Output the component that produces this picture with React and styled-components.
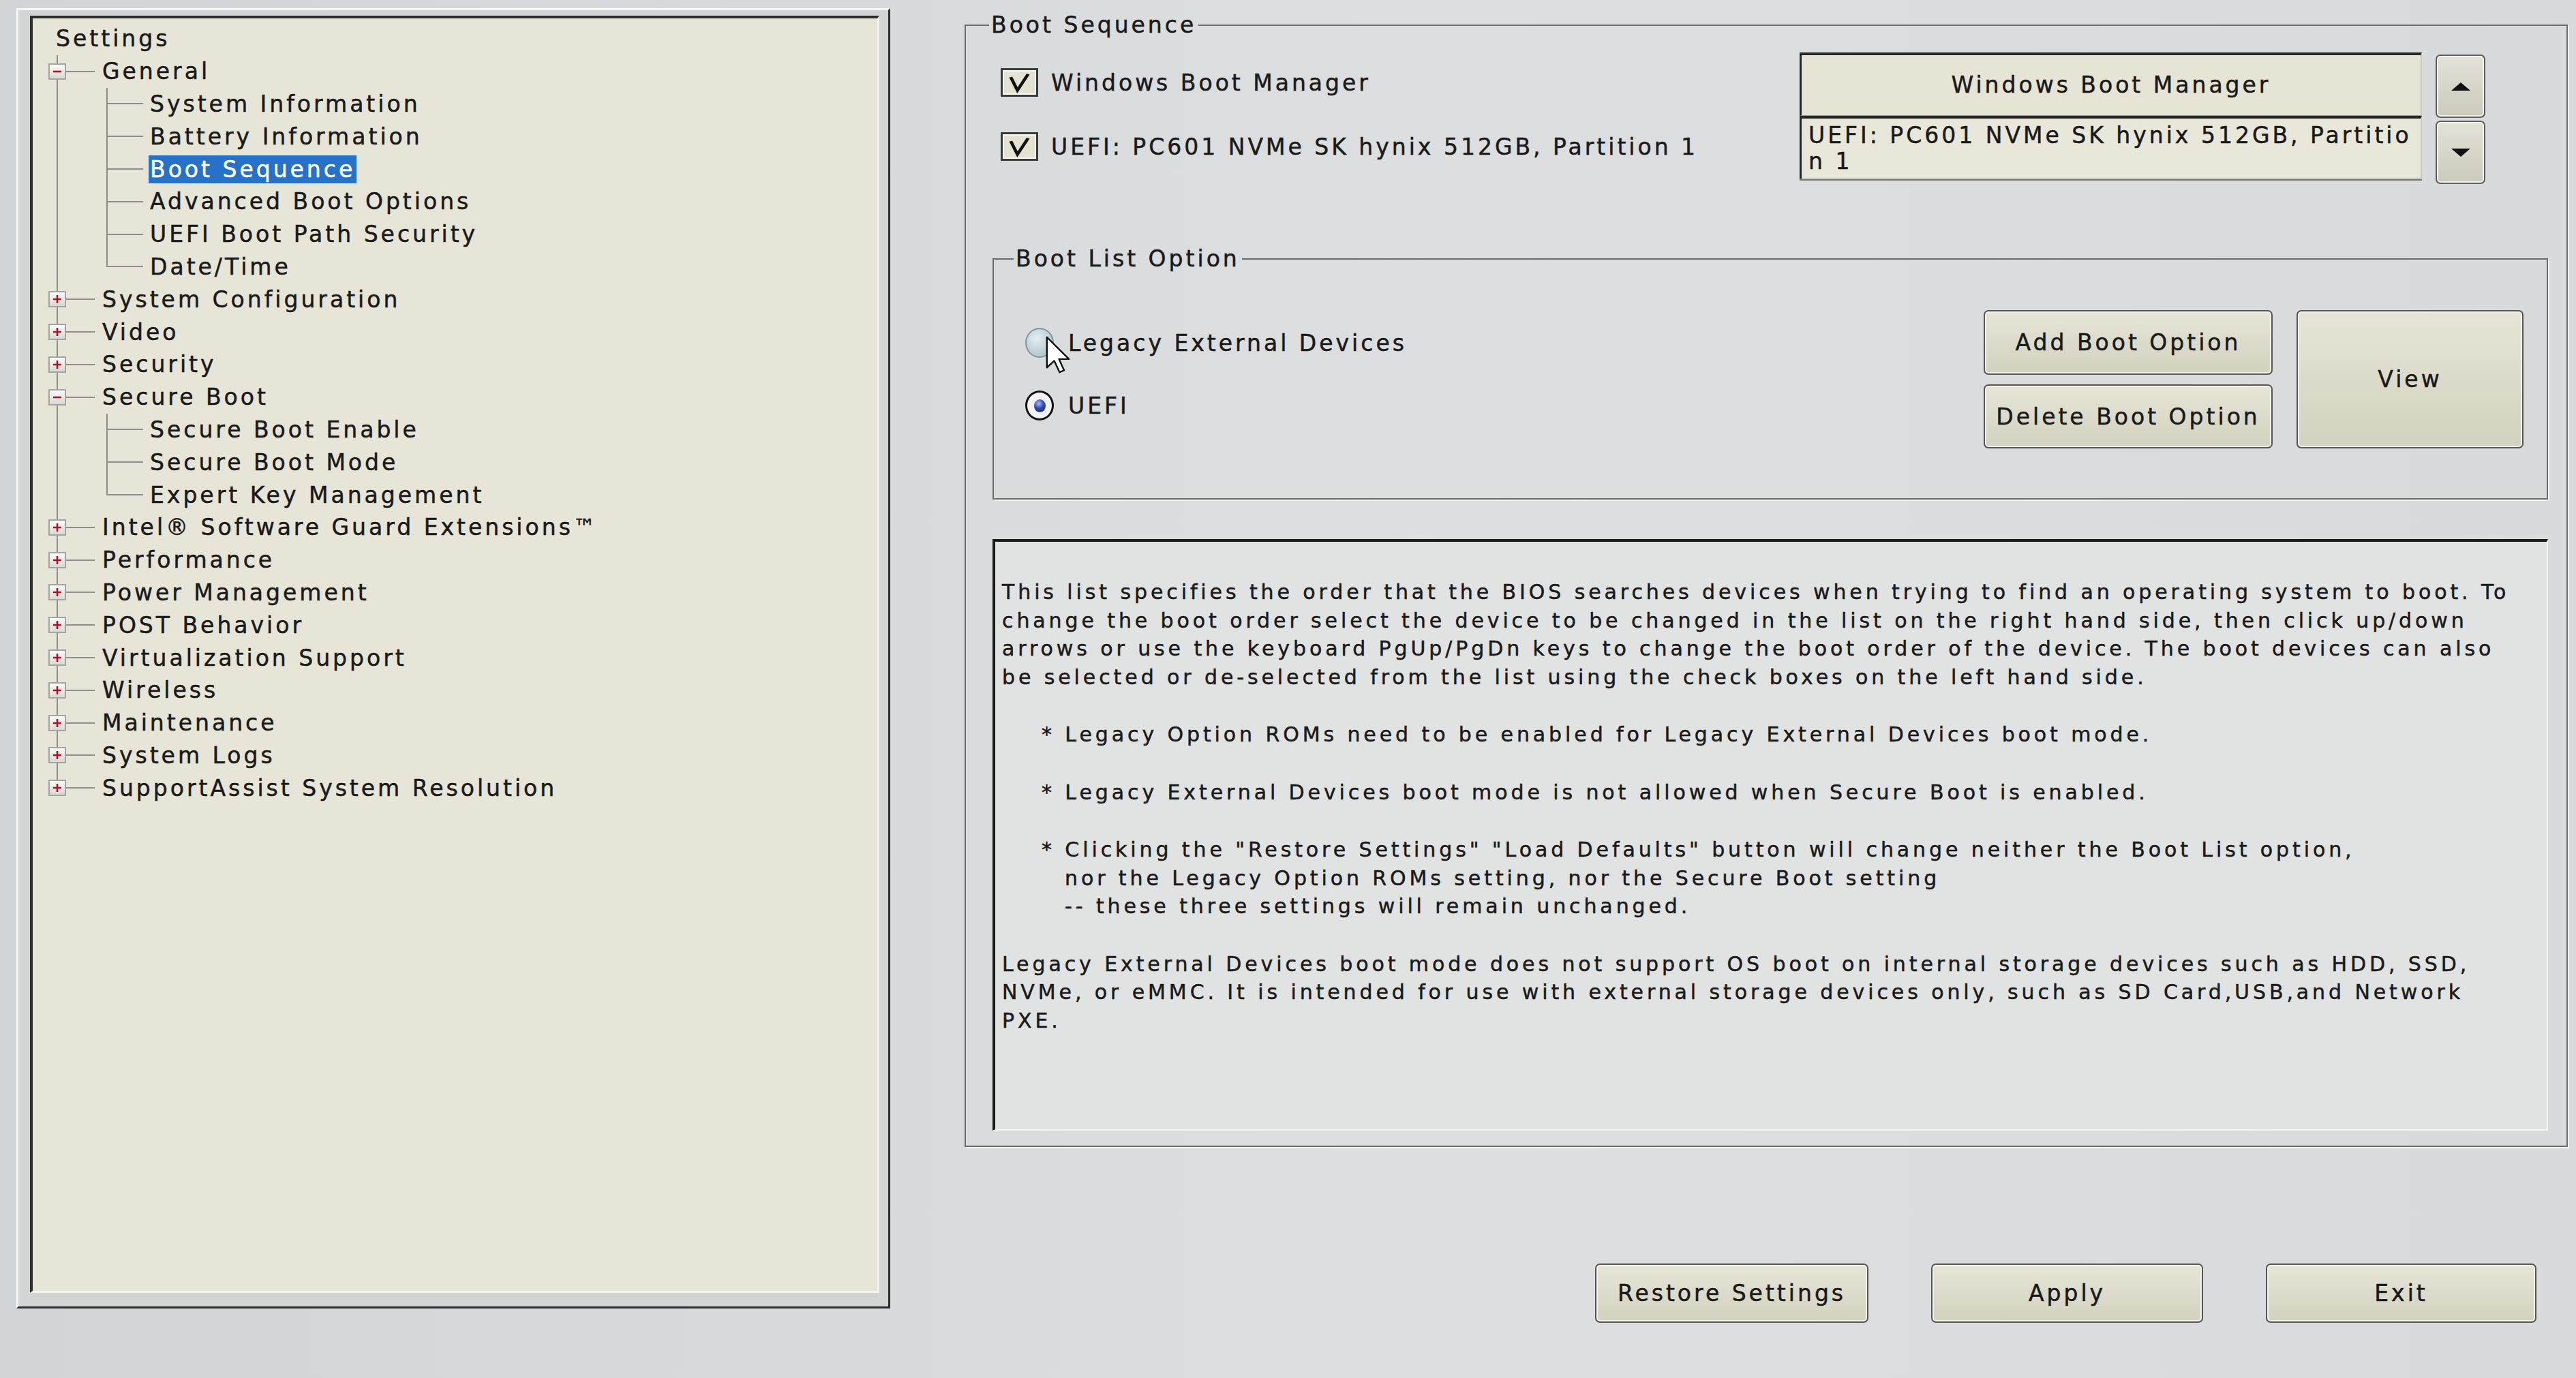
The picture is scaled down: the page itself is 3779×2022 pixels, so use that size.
import React from "react";
import styled, { createGlobalStyle, css } from "styled-components";

const LINE = "#8e8e8e";

const GlobalStyle = createGlobalStyle`
  html, body { margin: 0; padding: 0; }
  body {
    background: #d8dadb;
    font-family: "DejaVu Sans", "Liberation Sans", sans-serif;
    color: #1a1a1a;
  }
`;

const Screen = styled.div`
  width: 3779px;
  height: 2022px;
  display: flex;
  align-items: flex-start;
  overflow: hidden;
  background: linear-gradient(90deg, #d2d5d7 0%, #dcdedf 55%, #d8dadb 100%);
  font-size: 33px;
  letter-spacing: 4px;
  -webkit-text-stroke: 0.5px #1a1a1a;
`;

/* ---------- left tree ---------- */

const TreeFrame = styled.div`
  flex: none;
  width: 1282px;
  height: 1908px;
  margin: 12px 0 0 24px;
  box-sizing: border-box;
  border: 3px solid;
  border-color: #f6f6f4 #2a2a2a #2a2a2a #f6f6f4;
  padding: 8px 13px 20px 17px;
  background: #d3d5d4;
`;

const TreePane = styled.div`
  height: 100%;
  box-sizing: border-box;
  border-style: solid;
  border-width: 4px 3px 3px 4px;
  border-color: #2e2e2e #f3f3ef #f3f3ef #2e2e2e;
  background: #e7e5d7;
  padding-top: 6px;
`;

const Row = styled.div`
  display: flex;
  align-items: center;
  height: 47.8px;
  white-space: nowrap;
`;

const RootLabel = styled.span`
  padding-left: 34px;
`;

const Gutter = styled.div`
  flex: none;
  align-self: stretch;
  width: ${(p) => p.$w}px;
  display: flex;
  align-items: center;
  background:
    linear-gradient(${LINE}, ${LINE}) no-repeat ${(p) => p.$x}px 0 /
      2px ${(p) => (p.$v === "half" ? "50%" : p.$v === "full" ? "100%" : "0px")},
    linear-gradient(${LINE}, ${LINE}) no-repeat ${(p) => p.$x}px 50% /
      ${(p) => p.$h || 0}px 2px;
`;

const Expander = styled.span`
  width: 26px;
  height: 24px;
  box-sizing: border-box;
  margin-left: ${(p) => p.$x - 12}px;
  border: 2px solid #a4a4a4;
  background: linear-gradient(#fbfbf8, #d9d9d1);
  display: flex;
  align-items: center;
  justify-content: center;
`;

const Label = styled.span`
  padding: 0 2px;
  margin-left: -2px;
  line-height: 41px;
  ${(p) =>
    p.$selected &&
    css`
      background: #2672c8;
      color: #ffffff;
      -webkit-text-stroke: 0.5px #ffffff;
    `}
`;

const tree = [
  {
    label: "General",
    open: true,
    children: [
      "System Information",
      "Battery Information",
      "Boot Sequence",
      "Advanced Boot Options",
      "UEFI Boot Path Security",
      "Date/Time",
    ],
  },
  { label: "System Configuration" },
  { label: "Video" },
  { label: "Security" },
  {
    label: "Secure Boot",
    open: true,
    children: ["Secure Boot Enable", "Secure Boot Mode", "Expert Key Management"],
  },
  { label: "Intel® Software Guard Extensions™" },
  { label: "Performance" },
  { label: "Power Management" },
  { label: "POST Behavior" },
  { label: "Virtualization Support" },
  { label: "Wireless" },
  { label: "Maintenance" },
  { label: "System Logs" },
  { label: "SupportAssist System Resolution" },
];

function Sign({ open }) {
  return (
    <svg width="14" height="14" viewBox="0 0 14 14">
      <path d={open ? "M1 7H13" : "M1 7H13M7 1V13"} stroke="#b0122d" strokeWidth="2.6" />
    </svg>
  );
}

function SettingsTree() {
  const rows = [];
  tree.forEach((node, i) => {
    const lastTop = i === tree.length - 1;
    rows.push(
      <Row key={node.label}>
        <Gutter $w={102} $x={35} $v={lastTop ? "half" : "full"} $h={56}>
          <Expander $x={35}>
            <Sign open={node.open} />
          </Expander>
        </Gutter>
        <Label>{node.label}</Label>
      </Row>
    );
    (node.children || []).forEach((child, j) => {
      const lastChild = j === node.children.length - 1;
      rows.push(
        <Row key={child}>
          <Gutter $w={102} $x={35} $v="full" />
          <Gutter $w={70} $x={6} $v={lastChild ? "half" : "full"} $h={54} />
          <Label $selected={child === "Boot Sequence"}>{child}</Label>
        </Row>
      );
    });
  });
  return (
    <TreeFrame>
      <TreePane>
        <Row>
          <RootLabel>Settings</RootLabel>
        </Row>
        {rows}
      </TreePane>
    </TreeFrame>
  );
}

/* ---------- right side ---------- */

const Main = styled.div`
  flex: none;
  width: 2352px;
  margin-left: 109px;
  padding-top: 17px;
  display: flex;
  flex-direction: column;
`;

const Group = styled.fieldset`
  margin: 0;
  min-width: 0;
  box-sizing: border-box;
  border: 2px solid #6c6c6c;
  box-shadow: 2px 2px 0 #f3f3f1;
  padding: ${(p) => p.$pad};
  margin-top: ${(p) => p.$top || 0}px;
`;

const Legend = styled.legend`
  padding: 0 3px;
  margin-left: ${(p) => p.$offset}px;
  line-height: 40px;
  white-space: nowrap;
`;

const TopSection = styled.div`
  display: flex;
  justify-content: space-between;
  align-items: flex-start;
  height: 193px;
`;

const CheckList = styled.div`
  display: flex;
  flex-direction: column;
  gap: 52px;
  padding: 23px 0 0 12px;
`;

const CheckRow = styled.div`
  display: flex;
  align-items: center;
  gap: 19px;
  height: 42px;
  white-space: nowrap;
`;

const CheckBox = styled.span`
  flex: none;
  width: 55px;
  height: 42px;
  box-sizing: border-box;
  border: 3px solid #3a3a3a;
  box-shadow: inset 0 0 0 2px #fbfbf6;
  background: #e4e2d3;
  display: flex;
`;

const OrderBox = styled.div`
  display: flex;
  gap: 20px;
  margin-right: 92px;
`;

const ListBox = styled.div`
  width: 913px;
  height: 188px;
  display: flex;
  flex-direction: column;
  background: #e8e6d8;
  border-bottom: 2px solid #7a7a7a;
  box-sizing: border-box;
`;

const ListItem = styled.div`
  flex: 1;
  box-sizing: border-box;
  border-top: 4px solid #262626;
  border-left: 3px solid #262626;
  border-right: 2px solid #c9c9c4;
  border-bottom: 1px solid #9a9a94;
  display: flex;
  align-items: center;
  justify-content: ${(p) => (p.$center ? "center" : "flex-start")};
  padding-left: ${(p) => (p.$center ? 0 : 10)}px;
  line-height: 38px;
  white-space: nowrap;
  overflow: hidden;
  background: ${(p) => (p.$center ? "#e6e4d4" : "#e9e7da")};
`;

const ArrowColumn = styled.div`
  display: flex;
  flex-direction: column;
  gap: 4px;
  margin-top: 3px;
`;

const ArrowButton = styled.div`
  width: 73px;
  height: 93px;
  box-sizing: border-box;
  border: 2px solid #5f5f5f;
  border-radius: 7px;
  background: linear-gradient(#e3e2d6, #cbcabd);
  box-shadow: inset 0 0 0 2px #f2f2ec;
  display: flex;
  align-items: center;
  justify-content: center;
`;

const OptionBody = styled.div`
  display: flex;
  justify-content: space-between;
`;

const RadioList = styled.div`
  display: flex;
  flex-direction: column;
  gap: 46px;
  padding-top: 25px;
`;

const RadioRow = styled.div`
  position: relative;
  display: flex;
  align-items: center;
  gap: 21px;
  height: 46px;
  white-space: nowrap;
`;

const Radio = styled.span`
  flex: none;
  width: 42px;
  height: 44px;
  box-sizing: border-box;
  border-radius: 50%;
  display: flex;
  align-items: center;
  justify-content: center;
  ${(p) =>
    p.$checked
      ? css`
          border: 3px solid #131313;
          background: #f3f3f3;
        `
      : css`
          border: 2px solid #7f959f;
          background: radial-gradient(circle at 40% 35%, #e4eef2, #b7c9d1 70%);
        `}
`;

const RadioDot = styled.span`
  width: 17px;
  height: 19px;
  border-radius: 50%;
  background: radial-gradient(circle at 40% 32%, #a9bcff 0%, #3048a8 45%, #141f5e 100%);
`;

const Cursor = styled.svg`
  position: absolute;
  left: 30px;
  top: 13px;
`;

const ButtonGrid = styled.div`
  display: grid;
  grid-template-columns: 424px 333px;
  grid-template-rows: 95px 94px;
  column-gap: 35px;
  row-gap: 14px;
`;

const BiosButton = styled.div`
  box-sizing: border-box;
  width: ${(p) => (p.$w ? `${p.$w}px` : "auto")};
  height: ${(p) => (p.$h ? `${p.$h}px` : "auto")};
  grid-row: ${(p) => (p.$tall ? "1 / span 2" : "auto")};
  grid-column: ${(p) => (p.$tall ? "2" : "auto")};
  border: 2px solid #565656;
  border-radius: 7px;
  background: linear-gradient(#e6e5d7, #d3d2c0);
  box-shadow: inset 0 0 0 2px #f3f3ec;
  display: flex;
  align-items: center;
  justify-content: center;
  white-space: nowrap;
`;

const HelpBox = styled.div`
  margin-top: 58px;
  height: 868px;
  box-sizing: border-box;
  border-style: solid;
  border-width: 4px 2px 2px 4px;
  border-color: #1b1b1b #f4f4f2 #f4f4f2 #1b1b1b;
  background: #e1e3e2;
  padding: 53px 20px 0 10px;
  font-size: 30px;
  letter-spacing: 4.9px;
  line-height: 41.5px;
  white-space: nowrap;
`;

const HelpPara = styled.p`
  margin: 0 0 43px;
`;

const HelpBullet = styled.p`
  margin: 0 0 43px;
  padding-left: 92px;
  text-indent: -34px;
`;

const ButtonBar = styled.div`
  display: flex;
  justify-content: flex-end;
  gap: 92px;
  margin-top: 171px;
  padding-right: 46px;
`;

function Check() {
  return (
    <svg width="100%" height="100%" viewBox="0 0 100 100" preserveAspectRatio="none">
      <polyline
        points="24,28 44,82 76,16"
        fill="none"
        stroke="#111"
        strokeWidth="10"
        strokeLinejoin="miter"
      />
    </svg>
  );
}

function Triangle({ up }) {
  return (
    <svg width="28" height="12" viewBox="0 0 28 12">
      <polygon points={up ? "0,12 14,0 28,12" : "0,0 28,0 14,12"} fill="#111" />
    </svg>
  );
}

function Pointer() {
  return (
    <Cursor width="36" height="55" viewBox="0 0 12 19" preserveAspectRatio="none">
      <path
        d="M0.6 0.6 L0.6 16 L4.2 12.6 L6.8 18.4 L9 17.4 L6.5 11.7 L11.4 11.7 Z"
        fill="#ffffff"
        stroke="#111"
        strokeWidth="2.4"
        vectorEffect="non-scaling-stroke"
        strokeLinejoin="round"
      />
    </Cursor>
  );
}

const bootEntries = ["Windows Boot Manager", "UEFI: PC601 NVMe SK hynix 512GB, Partition 1"];

export default function App() {
  return (
    <>
      <GlobalStyle />
      <Screen>
        <SettingsTree />
        <Main>
          <Group $pad="20px 27px 22px 39px">
            <Legend $offset={-5}>Boot Sequence</Legend>
            <TopSection>
              <CheckList>
                {bootEntries.map((entry) => (
                  <CheckRow key={entry}>
                    <CheckBox>
                      <Check />
                    </CheckBox>
                    {entry}
                  </CheckRow>
                ))}
              </CheckList>
              <OrderBox>
                <ListBox>
                  <ListItem $center>Windows Boot Manager</ListItem>
                  <ListItem>
                    <span>
                      UEFI: PC601 NVMe SK hynix 512GB, Partitio
                      <br />n 1
                    </span>
                  </ListItem>
                </ListBox>
                <ArrowColumn>
                  <ArrowButton>
                    <Triangle up />
                  </ArrowButton>
                  <ArrowButton>
                    <Triangle />
                  </ArrowButton>
                </ArrowColumn>
              </OrderBox>
            </TopSection>

            <Group $top={90} $pad="55px 34px 73px 46px">
              <Legend $offset={-17}>Boot List Option</Legend>
              <OptionBody>
                <RadioList>
                  <RadioRow>
                    <Radio />
                    Legacy External Devices
                    <Pointer />
                  </RadioRow>
                  <RadioRow>
                    <Radio $checked>
                      <RadioDot />
                    </Radio>
                    UEFI
                  </RadioRow>
                </RadioList>
                <ButtonGrid>
                  <BiosButton>Add Boot Option</BiosButton>
                  <BiosButton $tall>View</BiosButton>
                  <BiosButton>Delete Boot Option</BiosButton>
                </ButtonGrid>
              </OptionBody>
            </Group>

            <HelpBox>
              <HelpPara>
                This list specifies the order that the BIOS searches devices when trying to find an operating system to boot. To
                <br />
                change the boot order select the device to be changed in the list on the right hand side, then click up/down
                <br />
                arrows or use the keyboard PgUp/PgDn keys to change the boot order of the device. The boot devices can also
                <br />
                be selected or de-selected from the list using the check boxes on the left hand side.
              </HelpPara>
              <HelpBullet>* Legacy Option ROMs need to be enabled for Legacy External Devices boot mode.</HelpBullet>
              <HelpBullet>* Legacy External Devices boot mode is not allowed when Secure Boot is enabled.</HelpBullet>
              <HelpBullet>
                * Clicking the "Restore Settings" "Load Defaults" button will change neither the Boot List option,
                <br />
                nor the Legacy Option ROMs setting, nor the Secure Boot setting
                <br />
                -- these three settings will remain unchanged.
              </HelpBullet>
              <HelpPara>
                Legacy External Devices boot mode does not support OS boot on internal storage devices such as HDD, SSD,
                <br />
                NVMe, or eMMC. It is intended for use with external storage devices only, such as SD Card,USB,and Network
                <br />
                PXE.
              </HelpPara>
            </HelpBox>
          </Group>

          <ButtonBar>
            <BiosButton $w={401} $h={87}>Restore Settings</BiosButton>
            <BiosButton $w={399} $h={87}>Apply</BiosButton>
            <BiosButton $w={397} $h={87}>Exit</BiosButton>
          </ButtonBar>
        </Main>
      </Screen>
    </>
  );
}
